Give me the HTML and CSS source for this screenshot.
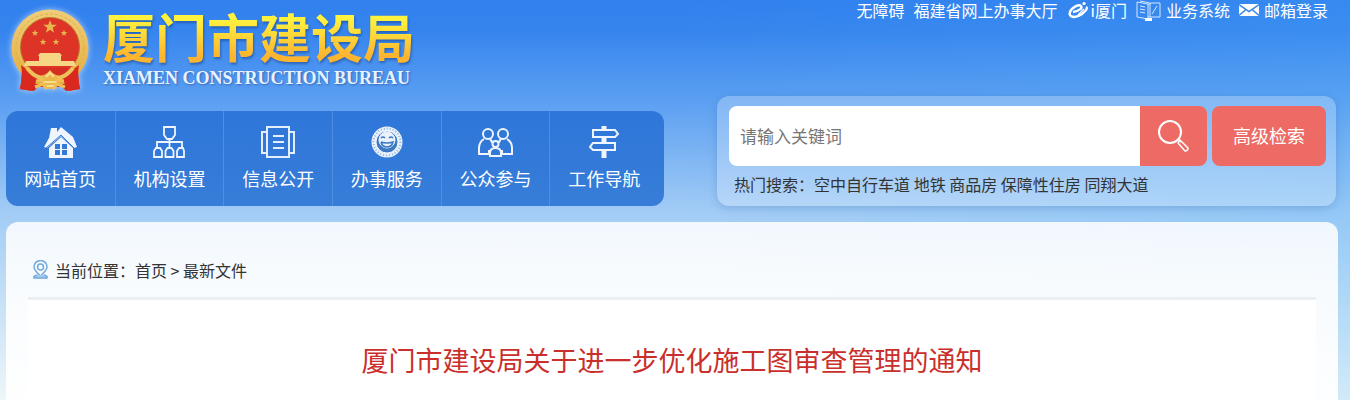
FILE: index.html
```html
<!DOCTYPE html>
<html lang="zh-CN">
<head>
<meta charset="utf-8">
<title>厦门市建设局</title>
<link rel="stylesheet" href="styles.css">
</head>
<body>
  <div class="page">
    <header class="header">
      <a class="brand" href="#">
        <svg class="emblem" viewBox="0 0 80 84" aria-hidden="true">
          <defs>
            <linearGradient id="gold" x1="0" y1="0" x2="0" y2="1">
              <stop offset="0" stop-color="#f0cd78"/>
              <stop offset="1" stop-color="#e3ad3c"/>
            </linearGradient>
            <path id="star" d="M0-7 1.7-2.2 6.7-2.2 2.7.8 4.1 5.7 0 2.8-4.1 5.7-2.7.8-6.7-2.2-1.7-2.2z"/>
          </defs>
          <path d="M11 56 Q13 66 10 81 L24 83 L28 79 L52 79 L56 83 L70 81 Q67 66 69 56z" fill="#cf2a22"/>
          <circle cx="40" cy="40" r="38.5" fill="url(#gold)"/>
          <circle cx="40" cy="40" r="34" fill="none" stroke="#dfae50" stroke-width="1" stroke-dasharray="3 2"/>
          <circle cx="40" cy="39" r="29.5" fill="#de3428" stroke="#b77a2c"/>
          <path d="M11 57 L28 70 L21 83 L10 81 Q13 67 11 57z M69 57 L52 70 L59 83 L70 81 Q67 67 69 57z" fill="#d9291f"/>
          <g fill="#e8b84e">
            <use href="#star" transform="translate(40 19)"/>
            <use href="#star" transform="translate(25 25) scale(.5)"/>
            <use href="#star" transform="translate(54 25) scale(.5)"/>
            <use href="#star" transform="translate(33 34) scale(.5)"/>
            <use href="#star" transform="translate(46 34) scale(.5)"/>
          </g>
          <path d="M30 45h20l2 3H28z M29 48h22v5H29z M16 53h48l2 5H14z" fill="#f6d684"/>
          <path d="M19 60h42l-6 7Q40 76 25 67z" fill="#d52e23"/>
          <path d="M17 60Q30 76 40 65Q50 76 63 60" fill="none" stroke="#efc15c" stroke-width="4"/>
          <circle cx="40" cy="73" r="8" fill="#e9b648"/>
          <path d="M36 69l4-4 4 4M33 74h14M36 78h8" fill="none" stroke="#f9dd8f" stroke-width="2"/>
          <path d="M26 73l9-1M54 73l-9-1M25 79l8-3 4 5M55 79l-8-3-4 5" stroke="#efbd54" stroke-width="3" fill="none"/>
        </svg>
        <span class="brand-text">
          <span class="brand-name">厦门市建设局</span>
          <span class="brand-en">XIAMEN CONSTRUCTION BUREAU</span>
        </span>
      </a>
      <div class="top-links">
        <a href="#">无障碍</a>
        <a href="#">福建省网上办事大厅</a>
        <a href="#" class="tight">
          <svg width="22" height="18" viewBox="0 0 22 18" fill="none" stroke="#fff" aria-hidden="true">
            <path d="M6 11C12 10 16 7 14 5C12 3 5 6 3 11C1 16 8 18 15 13C19 10 21 7 19 6" stroke-width="2.400"/>
            <path d="M11 14L17 8" stroke-width="1.500"/>
            <circle cx="17" cy="2.500" r="1.600" fill="#fff" stroke="none"/>
          </svg>
          i厦门
        </a>
        <a href="#">
          <svg width="25" height="21" viewBox="0 0 25 21" fill="none" stroke="#d6e7ff" aria-hidden="true">
            <path d="M1 2L12 4V19L1 17z M12 5L15 3H24V17H12 M4 1L14 3V17M4 6l5 1M4 9l5 1M4 12l5 1M16 14l5-8"/>
            <path d="M9 18h7v3H9z" fill="#fff" stroke="none"/>
          </svg>
          业务系统
        </a>
        <a href="#">
          <svg width="20" height="14" viewBox="0 0 20 14" aria-hidden="true">
            <path d="M0 1h20v12H0z" fill="#fff"/>
            <path d="M0 1.500l10 7 10-7M0 12.500l7-6M20 12.500l-7-6" fill="none" stroke="#3584ee" stroke-width="1.500"/>
          </svg>
          邮箱登录
        </a>
      </div>
    </header>

    <div class="toolbar">
      <nav class="nav">
        <a href="#">
          <svg class="wide" viewBox="0 0 36 32" fill="#eef5ff" aria-hidden="true">
            <path d="M9 2h6v4l4-5 12 10 4 10-3 1-13-12L5 22l-3-1 5-9z"/>
            <path d="M19 11L31 22v10H7V22z"/>
            <path d="M13 18h12v11H13z" fill="#3478d8"/>
            <path d="M18 18h2v11h-2zM13 23h12v1H13z"/>
            <path d="M4 22L19 9l13 13" fill="none" stroke="#3478d8"/>
          </svg>
          网站首页
        </a>
        <a href="#">
          <svg viewBox="0 0 32 32" fill="none" stroke="#eef5ff" stroke-width="1.800" aria-hidden="true">
            <path d="M11 1h11v8l-3 4h-5l-3-4zM16.500 13v8M4 22v-6h25v6"/>
            <path d="M3 22h4l2 3v6H1v-6zM14.500 22h4l2 3v6h-8v-6zM26 22h4l1 3v6h-7v-6z"/>
          </svg>
          机构设置
        </a>
        <a href="#">
          <svg class="wide" viewBox="0 0 36 32" fill="none" stroke="#e3eeff" stroke-width="2" aria-hidden="true">
            <path d="M7 1h22v30H7zM7 6H2v21h5M29 6h5v21h-5M13 10h11M13 16h11M13 22h11"/>
          </svg>
          信息公开
        </a>
        <a href="#">
          <svg viewBox="0 0 32 32" fill="none" stroke="#eef5ff" aria-hidden="true">
            <circle cx="16" cy="16" r="15.500" fill="#e9f1fb" stroke="none"/>
            <circle cx="16" cy="16" r="13.500" stroke="#8fb3df" stroke-width="2" stroke-dasharray="1 2"/>
            <circle cx="16" cy="16" r="11" fill="#3d78c3"/>
            <circle cx="16" cy="14" r="8" fill="#e9f1fb"/>
            <path d="M10 12q2-2 4 0M18 12q2-2 4 0M10 16q6 2 12 0q-1 5-6 5t-6-5" stroke="#3d78c3" stroke-width="1.500"/>
          </svg>
          办事服务
        </a>
        <a href="#">
          <svg class="wide" viewBox="0 0 36 32" fill="none" stroke="#eef5ff" stroke-width="2" aria-hidden="true">
            <circle cx="11" cy="8" r="5"/>
            <circle cx="26" cy="8" r="5"/>
            <path d="M7 13Q2 16 2 22v6h10v-4M13 13q2 2 2 4M30 13q5 3 5 9v6H25v-4M24 13q-2 2-2 4"/>
            <circle cx="18.500" cy="18" r="3"/>
            <path d="M13 30v-3q0-5 5.500-5t5.500 5v3z"/>
          </svg>
          公众参与
        </a>
        <a href="#">
          <svg viewBox="0 0 32 32" fill="none" stroke="#eef5ff" stroke-width="2" aria-hidden="true">
            <path d="M5 4h22l3 4-3 3H5zM27 17H5l-3 4 3 3h22z"/>
            <path d="M16 0v4M16 12v4M16 25v7" stroke-width="5"/>
          </svg>
          工作导航
        </a>
      </nav>

      <form class="search">
        <div class="search-row">
          <input class="search-input" type="text" placeholder="请输入关键词" aria-label="请输入关键词">
          <button class="search-button" type="button" aria-label="搜索">
            <svg width="32" height="32" viewBox="0 0 32 32" fill="none" stroke="#fff" stroke-width="2" aria-hidden="true">
              <circle cx="12" cy="12" r="11"/>
              <path d="M20 19l3 3M22 20l8 8q0 3-3 3l-7-8z" stroke-width="1.500"/>
            </svg>
          </button>
          <button class="advanced-button" type="button">高级检索</button>
        </div>
        <div class="hot">
          热门搜索：<a href="#">空中自行车道</a> <a href="#">地铁</a> <a href="#">商品房</a> <a href="#">保障性住房</a> <a href="#">同翔大道</a>
        </div>
      </form>
    </div>

    <main class="main">
      <div class="crumbs">
        <svg width="15" height="20" viewBox="0 0 15 20" fill="none" stroke="#72a9dc" stroke-width="1.500" aria-hidden="true">
          <path d="M7.500 16Q1 10 1 7a6.500 6.500 0 0 1 13 0Q14 10 7.500 16z"/>
          <circle cx="7.500" cy="7" r="3"/>
          <path d="M4 15q-4 1-3 3h13q1-2-3-3" fill="#a9cbea"/>
        </svg>
        <span>当前位置：<a href="#">首页</a> &gt; <a href="#">最新文件</a></span>
      </div>
      <article class="article">
        <h1>厦门市建设局关于进一步优化施工图审查管理的通知</h1>
      </article>
    </main>
  </div>
</body>
</html>
```

FILE: styles.css
```css
* {
  box-sizing: border-box;
}

body {
  margin: 0;
  background: #fff;
  font-family: "Noto Sans CJK SC", sans-serif;
  font-size: 16px;
  color: #333;
}

a {
  color: inherit;
  text-decoration: none;
}

.page {
  padding: 0 12px 0 6px;
  background:
    linear-gradient(90deg, transparent 50%, rgba(80, 180, 250, 0.18)),
    linear-gradient(#3080ee 0%, #3685ee 8%, #60a2f2 27%, #a2ccf5 53%, #c5e0f6 75%, #eef6f9 100%);
}

.header {
  display: flex;
  justify-content: space-between;
  align-items: flex-start;
  height: 96px;
}

.brand {
  display: flex;
  gap: 13px;
  padding: 8px 0 0 4px;
}

.emblem {
  width: 80px;
  height: 84px;
  filter: drop-shadow(0 0 3px rgba(255, 255, 255, 0.6));
}

.brand-text {
  display: flex;
  flex-direction: column;
}

.brand-name {
  font-size: 52px;
  font-weight: 700;
  line-height: 56px;
  color: transparent;
  background: linear-gradient(#fff23f 20%, #fdb52f 85%);
  background-clip: text;
  -webkit-background-clip: text;
  filter: drop-shadow(1px 2px 1px rgba(20, 60, 130, 0.5));
}

.brand-en {
  font-family: "Liberation Serif", serif;
  font-size: 18px;
  font-weight: 700;
  line-height: 28px;
  color: #e9f2ff;
  text-shadow: 1px 1px 2px rgba(20, 60, 130, 0.5);
}

.top-links {
  display: flex;
  gap: 9px;
  padding-right: 10px;
  color: #fff;
  line-height: 20px;
}

.top-links a {
  display: flex;
  align-items: center;
  gap: 5px;
  height: 20px;
}

.top-links .tight {
  gap: 2px;
}

.toolbar {
  display: grid;
  grid-template-columns: 658fr 619fr;
  gap: 53px;
  align-items: end;
  padding-right: 2px;
}

.nav {
  display: grid;
  grid-template-columns: repeat(6, 1fr);
  padding-right: 6px;
  border-radius: 12px;
  background: linear-gradient(#2e76d9, #377dd8);
  overflow: hidden;
}

.nav a {
  display: flex;
  flex-direction: column;
  align-items: center;
  gap: 8px;
  padding: 15px 0 16px;
  color: #fff;
  font-size: 18px;
  line-height: 24px;
}

.nav a + a {
  border-left: 1px solid #4f8fe2;
}

.nav svg {
  width: 32px;
  height: 32px;
}

.nav .wide {
  width: 36px;
}

.search {
  padding: 10px 10px 9px 12px;
  border-radius: 12px;
  background: rgba(255, 255, 255, 0.25);
  box-shadow: 0 2px 8px rgba(40, 90, 160, 0.25);
}

.search-row {
  display: flex;
  height: 60px;
}

.search-input {
  flex: 1;
  min-width: 0;
  padding: 0 11px 2px;
  border: none;
  border-radius: 8px 0 0 8px;
  background: #fff;
  font-family: inherit;
  font-size: 17px;
}

.search-input::placeholder {
  color: #757575;
}

.search-button,
.advanced-button {
  border: none;
  background: #ed6b64;
  color: #fff;
  font-family: inherit;
  font-size: 18px;
  cursor: pointer;
}

.search-button {
  display: flex;
  align-items: center;
  justify-content: center;
  width: 67px;
  border-radius: 0 8px 8px 0;
}

.advanced-button {
  width: 114px;
  margin-left: 5px;
  padding-bottom: 4px;
  border-radius: 8px;
}

.hot {
  padding: 7px 5px 1px;
  line-height: 23px;
}

.main {
  margin-top: 16px;
  padding: 0 22px;
  border-radius: 12px 12px 0 0;
  background: linear-gradient(rgba(255, 255, 255, 0.85), rgba(255, 255, 255, 0.9) 40%, rgba(255, 255, 255, 0.95));
}

.crumbs {
  display: flex;
  align-items: center;
  gap: 7px;
  padding: 36px 5px 15px;
  line-height: 24px;
}

.article {
  border-top: 3px solid #eceff2;
  background: #fff;
}

.article h1 {
  margin: 0;
  padding: 40px 0 21px;
  color: #c9302c;
  font-size: 27px;
  font-weight: 400;
  line-height: 39px;
  text-align: center;
}
```
